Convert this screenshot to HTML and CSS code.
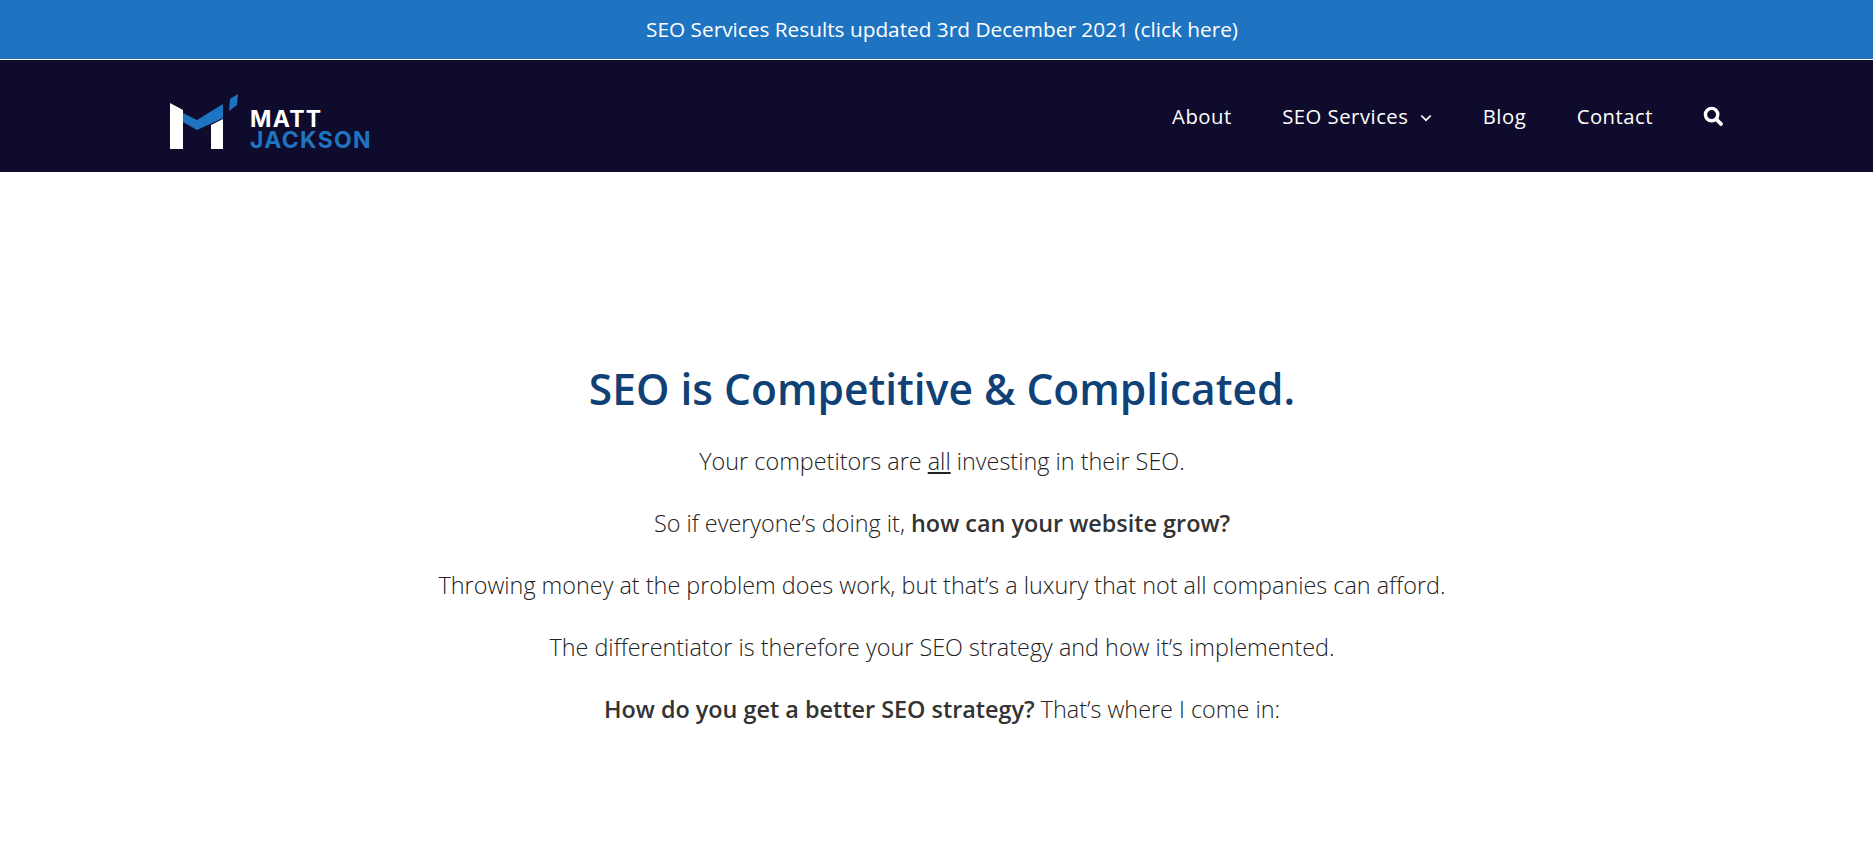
FILE: index.html
```html
<!DOCTYPE html>
<html lang="en">
<head>
<meta charset="utf-8">
<title>SEO is Competitive &amp; Complicated</title>
<link rel="stylesheet" href="styles.css">
</head>
<body>
<a class="banner" href="#">SEO Services Results updated 3rd December 2021 (click here)</a>
<header class="nav">
  <a class="logo" href="#">
    <svg class="logo-mark" width="70" height="56" viewBox="0 0 70 56">
      <polygon fill="#fff" points="0,9 13,16 13,55 0,55"/>
      <polygon fill="#fff" points="41,31 53,25 53,55 41,55"/>
      <polygon fill="#1f74c1" points="13,19 27,26 53,10 53,24 27,36 13,28"/>
      <polygon fill="#1f74c1" points="60,5 68,0 67,11 59,17"/>
    </svg>
    <span class="logo-text"><span class="logo-first">MATT</span><span class="logo-last">JACKSON</span></span>
  </a>
  <nav class="menu">
    <a href="#">About</a>
    <a href="#" class="has-sub">SEO Services
      <svg width="12" height="8" viewBox="0 0 12 8"><path d="M1.2 1.5 6 6.2l4.8-4.7" fill="none" stroke="#fff" stroke-width="1.7"/></svg>
    </a>
    <a href="#">Blog</a>
    <a href="#">Contact</a>
    <a href="#" class="search" aria-label="Search">
      <svg width="20" height="20" viewBox="0 0 20 20"><circle cx="8.6" cy="8.6" r="6.2" fill="none" stroke="#fff" stroke-width="3.4"/><path d="M13.4 13.4 18 18" stroke="#fff" stroke-width="3.8" stroke-linecap="round"/></svg>
    </a>
  </nav>
</header>
<main class="content">
  <h1>SEO is Competitive &amp; Complicated.</h1>
  <p>Your competitors are <u>all</u> investing in their SEO.</p>
  <p>So if everyone’s doing it, <strong>how can your website grow?</strong></p>
  <p>Throwing money at the problem does work, but that’s a luxury that not all companies can afford.</p>
  <p>The differentiator is therefore your SEO strategy and how it’s implemented.</p>
  <p><strong>How do you get a better SEO strategy?</strong> That’s where I come in:</p>
</main>
</body>
</html>
```
FILE: styles.css
```css
* { box-sizing: border-box; }
html, body { margin: 0; height: 100%; overflow: hidden; }
body { background: #fff; font-family: "Open Sans", sans-serif; color: #333; }
a { color: inherit; text-decoration: none; }
.banner {
  display: block; height: 60px; padding: 0 0 0 11px; line-height: 59px; text-align: center;
  background: #1f74c1; color: #fff; font-size: 20.8px; border-bottom: 1px solid #fff;
}
.nav {
  height: 112px; background: #0e0b2c; color: #fff;
  display: flex; align-items: center; justify-content: space-between;
  padding: 0 150px 0 170px;
}
.logo { display: flex; align-items: flex-end; gap: 10px; padding-top: 12px; }
.logo-mark { display: block; }
.logo-text { display: flex; flex-direction: column; gap: 1px; font-family: Inter, sans-serif; font-weight: 700; font-size: 23px; line-height: 20px; letter-spacing: 1.3px; }
.logo-last { color: #1f74c1; }
.menu { display: flex; align-items: center; gap: 50.5px; font-size: 20.3px; letter-spacing: .5px; }
.has-sub svg { margin-left: 6px; vertical-align: 2px; }
.search { margin-left: -.5px; }
.search svg { display: block; }
.content { padding: 187px 0 0 11px; text-align: center; }
h1 { margin: 0 0 22px; font-size: 42.5px; line-height: 60px; font-weight: 600; color: #0f4177; }
p { margin: 0 0 22px; font-size: 23.4px; line-height: 40px; font-weight: 300; color: #222; }
strong { font-weight: 600; color: #333; }
```
